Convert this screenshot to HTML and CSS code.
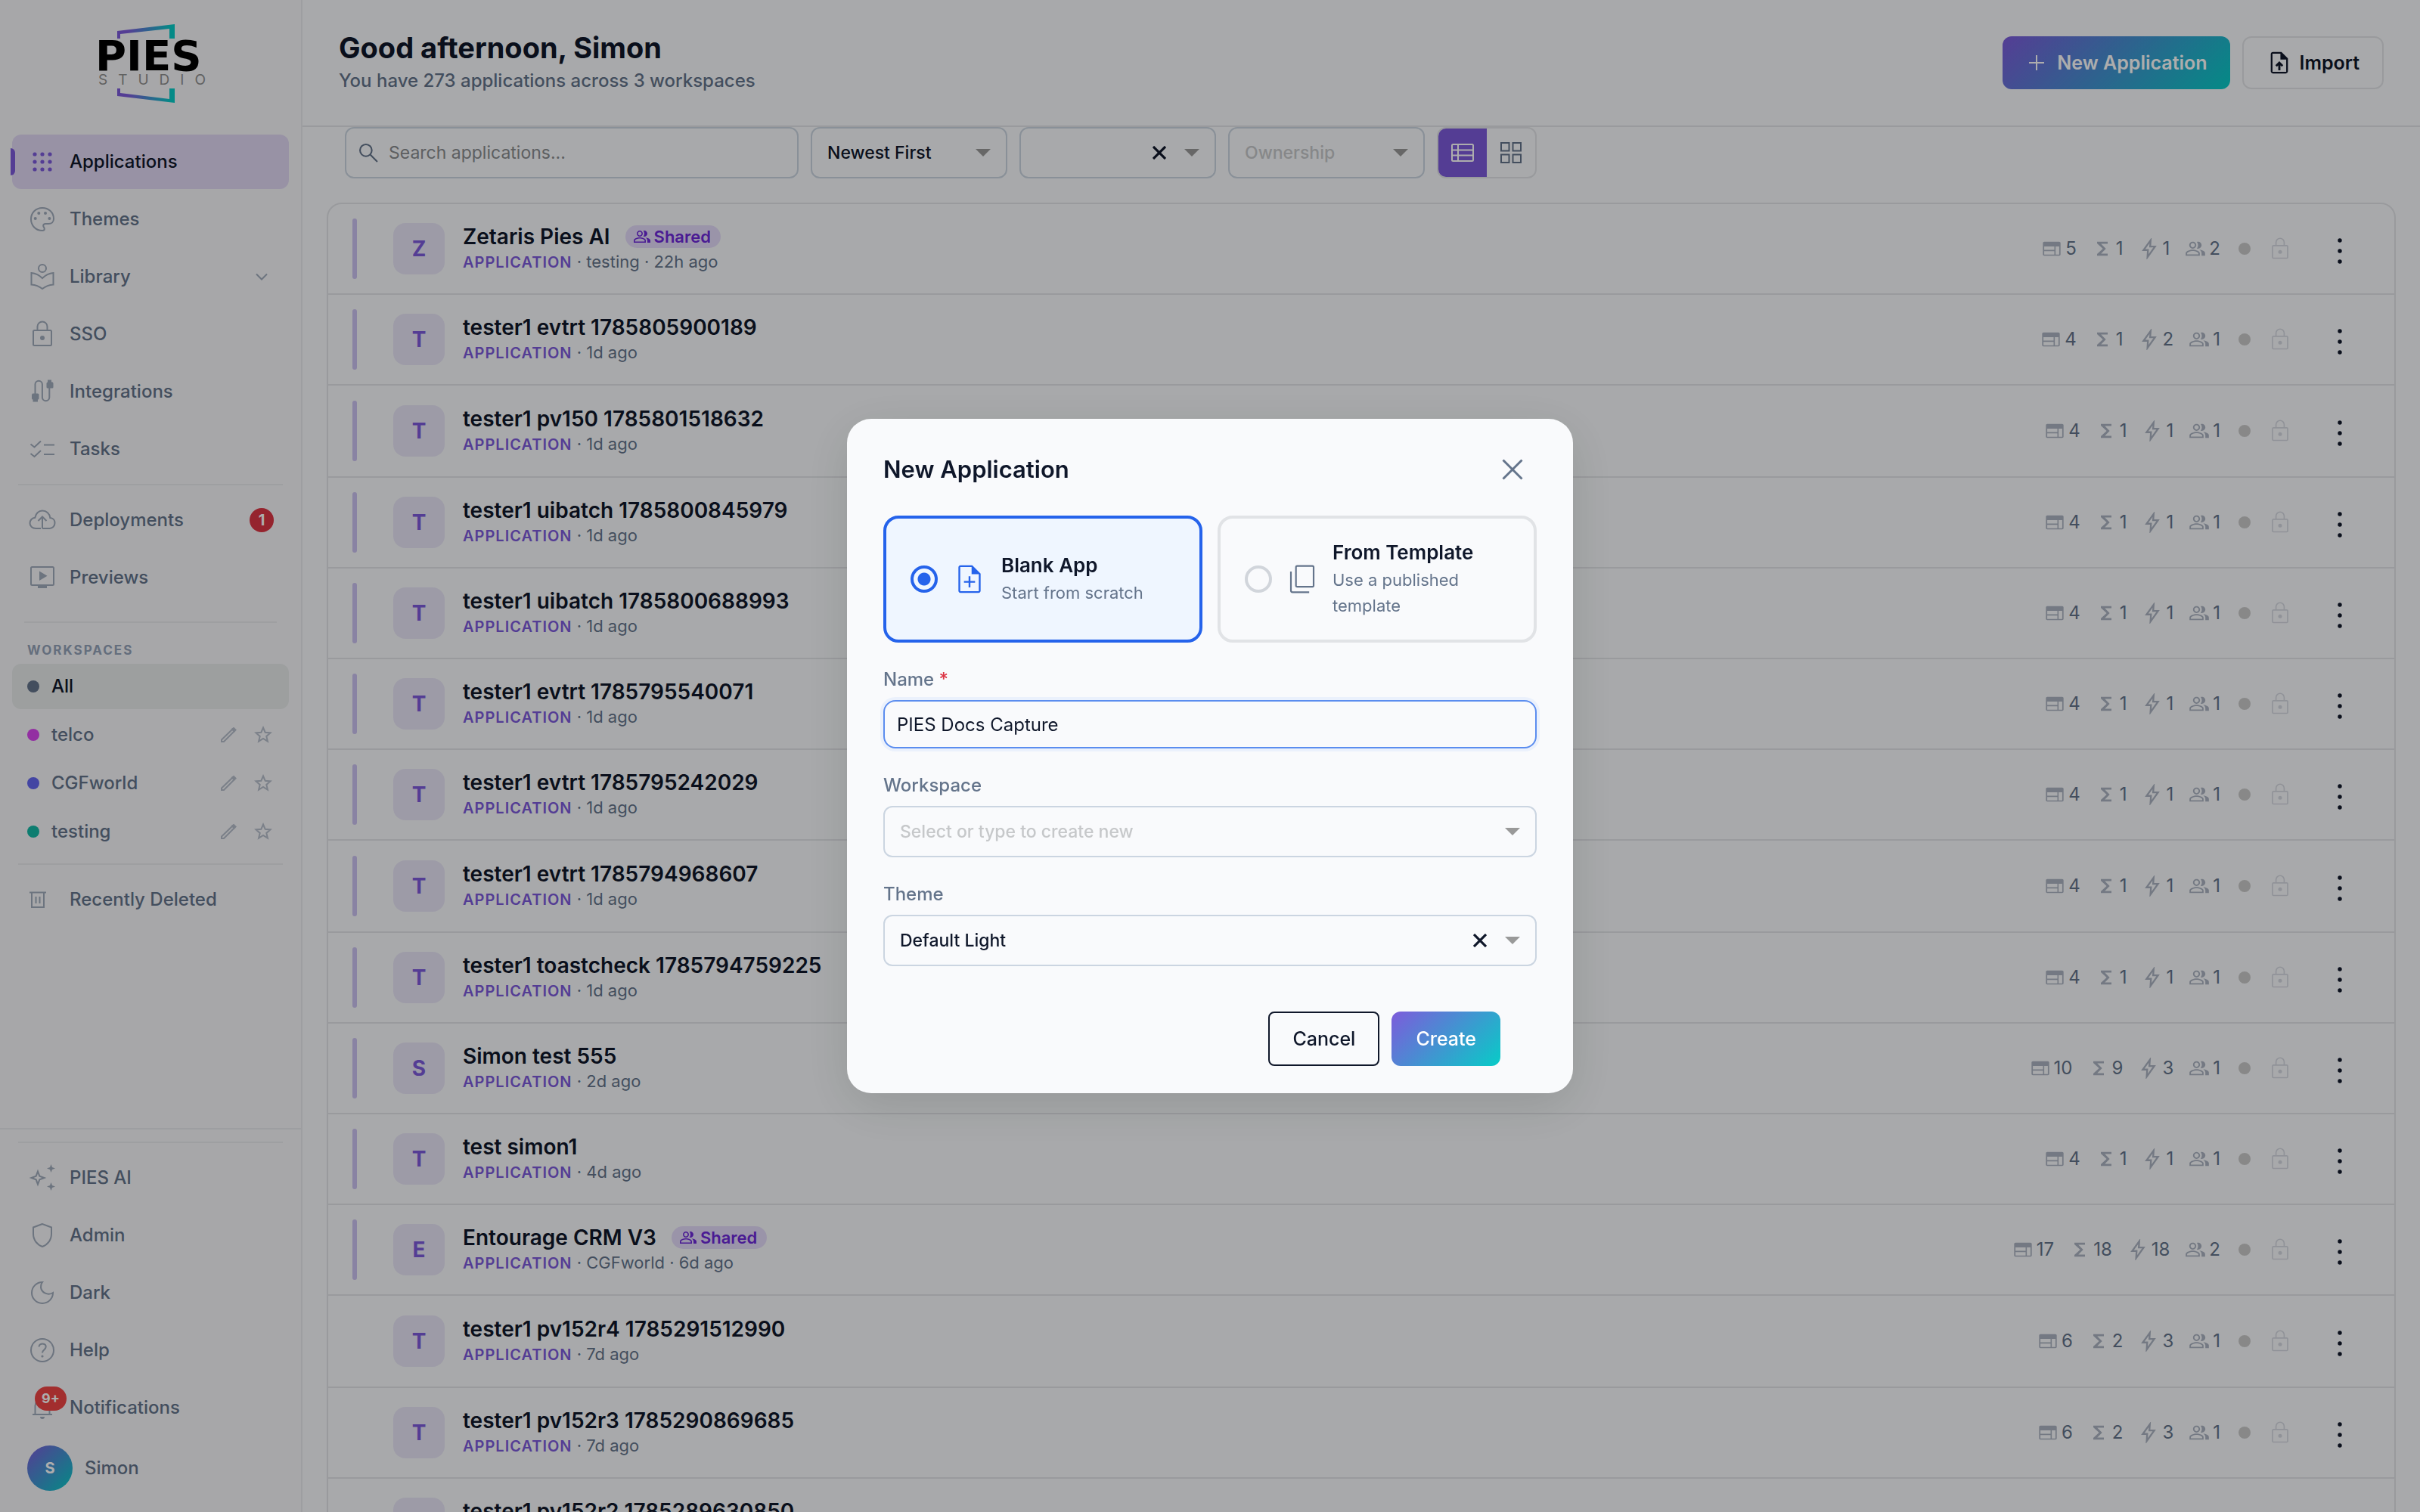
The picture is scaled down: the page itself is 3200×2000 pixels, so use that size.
FILE: index.html
```html
<!DOCTYPE html>
<html lang="en">
<head>
<meta charset="utf-8">
<title>PIES Studio – Applications</title>
<link rel="stylesheet" href="styles.css">
</head>
<body>
<svg class="sprite" aria-hidden="true">
  <symbol id="i-apps" viewBox="0 0 36 36"><g fill="currentColor" stroke="none"><circle cx="8" cy="8" r="2.6"/><circle cx="18" cy="8" r="2.6"/><circle cx="28" cy="8" r="2.6"/><circle cx="8" cy="18" r="2.6"/><circle cx="18" cy="18" r="2.6"/><circle cx="28" cy="18" r="2.6"/><circle cx="8" cy="28" r="2.6"/><circle cx="18" cy="28" r="2.6"/><circle cx="28" cy="28" r="2.6"/></g></symbol>
  <symbol id="i-palette" viewBox="0 0 36 36"><path d="M18 3C9.300 3 3 9.500 3 18s6.500 15 15 15c1.800 0 2.800-1 2.800-2.300 0-.9-.4-1.500-.8-2.100-.5-.7-.8-1.200-.8-2 0-1.600 1.300-2.600 3-2.600h4c4 0 6.800-2.700 6.800-6.500C33 9 26.300 3 18 3z"/><g fill="currentColor" stroke="none"><circle cx="8.700" cy="17" r="2"/><circle cx="13.300" cy="10" r="2"/><circle cx="22" cy="10" r="2"/><circle cx="27.400" cy="17" r="2"/></g></symbol>
  <symbol id="i-library" viewBox="0 0 36 36"><circle cx="18" cy="7" r="5"/><path d="M3.500 13c5.500.5 10.500 3 14.500 7 4-4 9-6.500 14.500-7v15.500c-5.500.3-10.500 2.300-14.500 5.500-4-3.200-9-5.200-14.500-5.500z"/></symbol>
  <symbol id="i-lock" viewBox="0 0 36 36"><rect x="6" y="13" width="24" height="20" rx="1.500"/><path d="M11.500 13V8a6.500 6.500 0 0 1 13 0v5"/><circle cx="18" cy="23" r="3" fill="currentColor" stroke="none"/></symbol>
  <symbol id="i-cable" viewBox="0 0 36 36"><path d="M8.500 21V8.500a4.700 4.700 0 0 1 9.400 0v17a4.700 4.700 0 0 0 9.400 0V12"/><path fill="currentColor" stroke="none" d="M5 20.500h7a1.500 1.500 0 0 1 1.500 1.500v5a1.500 1.500 0 0 1-1.500 1.500v3H5.500v-3A1.500 1.500 0 0 1 4 27v-5zM25 2.500h5v3a2 2 0 0 1 2.500 1.500v5a1.500 1.500 0 0 1-1.500 1.500h-6a1.500 1.500 0 0 1-1.500-1.500V7A2 2 0 0 1 25 5.500z"/></symbol>
  <symbol id="i-tasks" viewBox="0 0 36 36"><path d="M2.500 11.500l5 4 8.500-8M2.500 24l5 4 8.500-8M20 12.500h14M20 25h14"/></symbol>
  <symbol id="i-cloud" viewBox="0 0 36 36"><path d="M16 29H9.500C4.800 29 1.500 26 1.500 22c0-4 3-7 6.800-7.300C9.300 9.300 13.200 5.500 18 5.500c5.500 0 9.800 4 10.300 9.500 3.600.2 6.200 3 6.200 6.800 0 4-3 7.200-7 7.200H19c-.8 0-1-.5-1-1.500V13.500M12.500 19l5.500-5.500 5.500 5.500"/></symbol>
  <symbol id="i-preview" viewBox="0 0 36 36"><rect x="3" y="4" width="30" height="24" rx="1.500"/><path fill="currentColor" stroke="none" d="M14 9.500l10.500 6.300L14 22zM12 28h12v4H12z"/></symbol>
  <symbol id="i-sparkle" viewBox="0 0 36 36"><path d="M12 9.500l2.300 6.200 6.200 2.300-6.200 2.300L12 26.500l-2.300-6.200L3.500 18l6.200-2.300z"/><path fill="currentColor" stroke="none" d="M29.500 0l1.500 4 4 1.500-4 1.500-1.500 4L28 7l-4-1.500L28 4zM29.500 24l1.500 4 4 1.500-4 1.500-1.500 4-1.500-4-4-1.500 4-1.500z"/></symbol>
  <symbol id="i-shield" viewBox="0 0 36 36"><path d="M18 3L6 7.500V16c0 8 5 14.500 12 17 7-2.500 12-9 12-17V7.500z"/></symbol>
  <symbol id="i-moon" viewBox="0 0 36 36"><path d="M18 4A14 14 0 1 0 32 18c-6.500 4-15 0-16-7-.3-2.500.4-5 2-7z"/></symbol>
  <symbol id="i-help" viewBox="0 0 36 36"><circle cx="18" cy="18" r="15"/><path d="M13.500 13.500c.3-2.500 2-4 4.600-4 2.700 0 4.600 1.600 4.600 4 0 3.600-4.700 3.800-4.700 8"/><circle cx="18" cy="26" r="1.600" fill="currentColor" stroke="none"/></symbol>
  <symbol id="i-bell" viewBox="0 0 36 36"><path d="M5 27h26M8.500 27V15.500a9.500 9.500 0 0 1 19 0V27"/><path fill="currentColor" stroke="none" d="M15 30h6a3 3 0 0 1-6 0z"/></symbol>
  <symbol id="i-trash" viewBox="0 0 24 24"><path d="M1 2.500h22M4 3v19h16V3M9.500 8v9M14.500 8v9"/></symbol>
  <symbol id="i-edit" viewBox="0 0 24 24"><path d="M3 18.500L17.500 4.500l2.500 2.500L6 21H3z"/><path d="M17 4.500l2-1.500 2.500 2.500-2 2z" fill="currentColor"/></symbol>
  <symbol id="i-star" viewBox="0 0 24 24"><path d="M12 2.500l2.700 6.300 6.800.6-5.200 4.500 1.600 6.700L12 17l-5.900 3.600 1.600-6.700L2.500 9.400l6.800-.6z"/></symbol>
  <symbol id="i-chevron" viewBox="0 0 16 16"><path d="M1 4.500l7 7 7-7"/></symbol>
  <symbol id="i-search" viewBox="0 0 24 24"><circle cx="8.500" cy="8.500" r="7.500"/><path d="M14 14l9 9"/></symbol>
  <symbol id="i-plus" viewBox="0 0 20 20"><path d="M10 0v20M0 10h20"/></symbol>
  <symbol id="i-upload" viewBox="0 0 24 24"><path fill="currentColor" stroke="none" d="M14 2H6c-1.100 0-2 .9-2 2v16c0 1.100.9 2 2 2h12c1.100 0 2-.9 2-2V8zm4.400 18.400H5.600V3.600H13V9h5.400z"/><path d="M12 19v-6.500M9 15l3-3 3 3"/></symbol>
  <symbol id="i-doc" viewBox="0 0 24 24"><path fill="currentColor" stroke="none" d="M14 2H5.500C4.700 2 4 2.700 4 3.500v17c0 .8.700 1.500 1.500 1.500h13c.8 0 1.500-.7 1.500-1.500V8zm4.700 18.700H5.300V3.300H13.500V8.500h5.200z"/><path d="M12 10v8M8 14h8"/></symbol>
  <symbol id="i-copy" viewBox="0 0 24 24"><rect x="7" y="1.600" width="14" height="16.500" rx="1"/><path d="M3 6v15c0 .8.400 1.400 1.300 1.400H17.500"/></symbol>
  <symbol id="i-x" viewBox="0 0 28 28"><path d="M1.500 1.500l25 25M26.500 1.500l-25 25"/></symbol>
  <symbol id="i-web" viewBox="0 0 24 24"><path fill="currentColor" stroke="none" d="M20.500 4h-17C2.700 4 2 4.700 2 5.500v13c0 .8.700 1.500 1.500 1.500h17c.8 0 1.500-.7 1.500-1.500v-13c0-.8-.7-1.500-1.500-1.500zM15 18.600H3.500V14.700H15zm0-5.300H3.500V9.500H15zm5.500 5.300h-4.100V9.500h4.100z"/></symbol>
  <symbol id="i-sum" viewBox="0 0 24 24"><path fill="currentColor" stroke="none" d="M18 4H6v2l6.500 6L6 18v2h12v-2.500h-7.500l5.500-5.500-5.500-5.500H18z"/></symbol>
  <symbol id="i-bolt" viewBox="0 0 24 24"><path d="M13.500 2.500L5.500 13.500h5L10 21.500l8.500-12h-5.500z"/></symbol>
  <symbol id="i-people" viewBox="0 0 24 24"><path fill="currentColor" stroke="none" d="M16.670 13.130C18.040 14.060 19 15.320 19 17v3h4v-3c0-2.180-3.570-3.470-6.330-3.870zM15 12c2.210 0 4-1.790 4-4s-1.790-4-4-4c-.47 0-.91.1-1.330.24C14.500 5.270 15 6.580 15 8s-.5 2.730-1.330 3.760c.42.14.86.24 1.330.24zM9 12c2.210 0 4-1.790 4-4s-1.790-4-4-4-4 1.790-4 4 1.790 4 4 4zm0-6.400c1.300 0 2.400 1.100 2.400 2.400S10.300 10.400 9 10.400 6.600 9.300 6.600 8 7.700 5.600 9 5.600zM9 13c-2.670 0-8 1.340-8 4v3h16v-3c0-2.660-5.330-4-8-4zm6.400 5.400H2.600V17c.3-.9 3.500-2.400 6.400-2.400s6.100 1.500 6.400 2.400z"/></symbol>
  <symbol id="i-dots" viewBox="0 0 8 34"><g fill="currentColor" stroke="none"><circle cx="4" cy="3" r="2.700"/><circle cx="4" cy="17" r="2.700"/><circle cx="4" cy="31" r="2.700"/></g></symbol>
  <symbol id="i-list" viewBox="0 0 30 24"><rect x="1" y="1" width="28" height="22" rx="1.500"/><path d="M9 1v22M1 8.500h28M1 15.500h28"/></symbol>
  <symbol id="i-grid" viewBox="0 0 28 28"><path d="M1 1h10.500v10.500H1zM16.500 1H27v10.500H16.500zM1 16.500h10.500V27H1zM16.500 16.500H27V27H16.500z"/></symbol>
</svg>

<div class="app">
  <aside class="sidebar">
    <a class="logo" href="#" aria-label="PIES Studio">
      <svg width="140" height="106" viewBox="0 0 140 106">
        <defs><linearGradient id="frame" gradientUnits="userSpaceOnUse" x1="25" x2="101" y1="0" y2="0"><stop offset=".2" stop-color="#7d5bdb"/><stop offset=".95" stop-color="#07ccc7"/></linearGradient></defs>
        <path fill="url(#frame)" d="M26 10l76-9v19h-7V7L30 14v6h-4zM26 86h4v6l65 8V86h7v19l-76-9z"/>
        <text class="logo-name" x="-3" y="62">PIES</text>
        <text class="logo-sub" x="1" y="81">STUDIO</text>
      </svg>
    </a>
    <nav class="nav">
      <a class="nav-item active" href="#"><svg><use href="#i-apps"/></svg>Applications</a>
      <a class="nav-item" href="#"><svg><use href="#i-palette"/></svg>Themes</a>
      <a class="nav-item" href="#"><svg><use href="#i-library"/></svg>Library<svg class="chevron"><use href="#i-chevron"/></svg></a>
      <a class="nav-item" href="#"><svg><use href="#i-lock"/></svg>SSO</a>
      <a class="nav-item" href="#"><svg><use href="#i-cable"/></svg>Integrations</a>
      <a class="nav-item" href="#"><svg><use href="#i-tasks"/></svg>Tasks</a>
      <hr>
      <a class="nav-item" href="#"><svg><use href="#i-cloud"/></svg>Deployments<span class="count">1</span></a>
      <a class="nav-item" href="#"><svg><use href="#i-preview"/></svg>Previews</a>
    </nav>
    <section class="workspaces">
      <h2>Workspaces</h2>
      <div class="ws active"><i class="dot slate"></i><a href="#">All</a></div>
      <div class="ws"><i class="dot pink"></i><a href="#">telco</a><button aria-label="Edit telco"><svg><use href="#i-edit"/></svg></button><button aria-label="Star telco"><svg><use href="#i-star"/></svg></button></div>
      <div class="ws"><i class="dot indigo"></i><a href="#">CGFworld</a><button aria-label="Edit CGFworld"><svg><use href="#i-edit"/></svg></button><button aria-label="Star CGFworld"><svg><use href="#i-star"/></svg></button></div>
      <div class="ws"><i class="dot teal"></i><a href="#">testing</a><button aria-label="Edit testing"><svg><use href="#i-edit"/></svg></button><button aria-label="Star testing"><svg><use href="#i-star"/></svg></button></div>
    </section>
    <nav class="nav deleted">
      <hr>
      <a class="nav-item" href="#"><svg class="small"><use href="#i-trash"/></svg>Recently Deleted</a>
    </nav>
    <nav class="nav bottom">
      <hr>
      <a class="nav-item" href="#"><svg><use href="#i-sparkle"/></svg>PIES AI</a>
      <a class="nav-item" href="#"><svg><use href="#i-shield"/></svg>Admin</a>
      <a class="nav-item" href="#"><svg><use href="#i-moon"/></svg>Dark</a>
      <a class="nav-item" href="#"><svg><use href="#i-help"/></svg>Help</a>
      <a class="nav-item" href="#"><svg><use href="#i-bell"/></svg>Notifications<span class="alerts">9+</span></a>
      <a class="nav-item user" href="#"><span class="user-pic">S</span>Simon</a>
    </nav>
  </aside>

  <main class="main">
    <header class="page-head">
      <div class="greeting">
        <h1>Good afternoon, Simon</h1>
        <p>You have 273 applications across 3 workspaces</p>
      </div>
      <button class="btn primary"><svg class="plus"><use href="#i-plus"/></svg>New Application</button>
      <button class="btn outline"><svg><use href="#i-upload"/></svg>Import</button>
    </header>
    <div class="toolbar">
      <label class="search"><svg><use href="#i-search"/></svg><input type="search" placeholder="Search applications..." aria-label="Search applications"></label>
      <div class="select"><select aria-label="Sort order"><option>Newest First</option></select><i class="arrow"></i></div>
      <div class="select clearable"><select aria-label="Type"><option></option></select><button class="clear" aria-label="Clear type"><svg><use href="#i-x"/></svg></button><i class="arrow"></i></div>
      <div class="select empty"><select aria-label="Ownership"><option>Ownership</option></select><i class="arrow"></i></div>
      <div class="views">
        <button class="on" aria-label="List view"><svg class="list-ico"><use href="#i-list"/></svg></button>
        <button aria-label="Grid view"><svg class="grid-ico"><use href="#i-grid"/></svg></button>
      </div>
    </div>

    <ul class="apps">
      <li class="row mine"><span class="tile">Z</span><div class="info"><h3>Zetaris Pies AI <span class="shared"><svg><use href="#i-people"/></svg>Shared</span></h3><p><b>Application</b> · testing · 22h ago</p></div>
        <div class="stats"><span><svg><use href="#i-web"/></svg>5</span><span><svg><use href="#i-sum"/></svg>1</span><span><svg><use href="#i-bolt"/></svg>1</span><span><svg><use href="#i-people"/></svg>2</span></div><i class="status"></i><svg class="lock"><use href="#i-lock"/></svg><button class="more" aria-label="More"><svg><use href="#i-dots"/></svg></button></li>
      <li class="row mine"><span class="tile">T</span><div class="info"><h3>tester1 evtrt 1785805900189</h3><p><b>Application</b> · 1d ago</p></div>
        <div class="stats"><span><svg><use href="#i-web"/></svg>4</span><span><svg><use href="#i-sum"/></svg>1</span><span><svg><use href="#i-bolt"/></svg>2</span><span><svg><use href="#i-people"/></svg>1</span></div><i class="status"></i><svg class="lock"><use href="#i-lock"/></svg><button class="more" aria-label="More"><svg><use href="#i-dots"/></svg></button></li>
      <li class="row mine"><span class="tile">T</span><div class="info"><h3>tester1 pv150 1785801518632</h3><p><b>Application</b> · 1d ago</p></div>
        <div class="stats"><span><svg><use href="#i-web"/></svg>4</span><span><svg><use href="#i-sum"/></svg>1</span><span><svg><use href="#i-bolt"/></svg>1</span><span><svg><use href="#i-people"/></svg>1</span></div><i class="status"></i><svg class="lock"><use href="#i-lock"/></svg><button class="more" aria-label="More"><svg><use href="#i-dots"/></svg></button></li>
      <li class="row mine"><span class="tile">T</span><div class="info"><h3>tester1 uibatch 1785800845979</h3><p><b>Application</b> · 1d ago</p></div>
        <div class="stats"><span><svg><use href="#i-web"/></svg>4</span><span><svg><use href="#i-sum"/></svg>1</span><span><svg><use href="#i-bolt"/></svg>1</span><span><svg><use href="#i-people"/></svg>1</span></div><i class="status"></i><svg class="lock"><use href="#i-lock"/></svg><button class="more" aria-label="More"><svg><use href="#i-dots"/></svg></button></li>
      <li class="row mine"><span class="tile">T</span><div class="info"><h3>tester1 uibatch 1785800688993</h3><p><b>Application</b> · 1d ago</p></div>
        <div class="stats"><span><svg><use href="#i-web"/></svg>4</span><span><svg><use href="#i-sum"/></svg>1</span><span><svg><use href="#i-bolt"/></svg>1</span><span><svg><use href="#i-people"/></svg>1</span></div><i class="status"></i><svg class="lock"><use href="#i-lock"/></svg><button class="more" aria-label="More"><svg><use href="#i-dots"/></svg></button></li>
      <li class="row mine"><span class="tile">T</span><div class="info"><h3>tester1 evtrt 1785795540071</h3><p><b>Application</b> · 1d ago</p></div>
        <div class="stats"><span><svg><use href="#i-web"/></svg>4</span><span><svg><use href="#i-sum"/></svg>1</span><span><svg><use href="#i-bolt"/></svg>1</span><span><svg><use href="#i-people"/></svg>1</span></div><i class="status"></i><svg class="lock"><use href="#i-lock"/></svg><button class="more" aria-label="More"><svg><use href="#i-dots"/></svg></button></li>
      <li class="row mine"><span class="tile">T</span><div class="info"><h3>tester1 evtrt 1785795242029</h3><p><b>Application</b> · 1d ago</p></div>
        <div class="stats"><span><svg><use href="#i-web"/></svg>4</span><span><svg><use href="#i-sum"/></svg>1</span><span><svg><use href="#i-bolt"/></svg>1</span><span><svg><use href="#i-people"/></svg>1</span></div><i class="status"></i><svg class="lock"><use href="#i-lock"/></svg><button class="more" aria-label="More"><svg><use href="#i-dots"/></svg></button></li>
      <li class="row mine"><span class="tile">T</span><div class="info"><h3>tester1 evtrt 1785794968607</h3><p><b>Application</b> · 1d ago</p></div>
        <div class="stats"><span><svg><use href="#i-web"/></svg>4</span><span><svg><use href="#i-sum"/></svg>1</span><span><svg><use href="#i-bolt"/></svg>1</span><span><svg><use href="#i-people"/></svg>1</span></div><i class="status"></i><svg class="lock"><use href="#i-lock"/></svg><button class="more" aria-label="More"><svg><use href="#i-dots"/></svg></button></li>
      <li class="row mine"><span class="tile">T</span><div class="info"><h3>tester1 toastcheck 1785794759225</h3><p><b>Application</b> · 1d ago</p></div>
        <div class="stats"><span><svg><use href="#i-web"/></svg>4</span><span><svg><use href="#i-sum"/></svg>1</span><span><svg><use href="#i-bolt"/></svg>1</span><span><svg><use href="#i-people"/></svg>1</span></div><i class="status"></i><svg class="lock"><use href="#i-lock"/></svg><button class="more" aria-label="More"><svg><use href="#i-dots"/></svg></button></li>
      <li class="row mine"><span class="tile">S</span><div class="info"><h3>Simon test 555</h3><p><b>Application</b> · 2d ago</p></div>
        <div class="stats"><span><svg><use href="#i-web"/></svg>10</span><span><svg><use href="#i-sum"/></svg>9</span><span><svg><use href="#i-bolt"/></svg>3</span><span><svg><use href="#i-people"/></svg>1</span></div><i class="status"></i><svg class="lock"><use href="#i-lock"/></svg><button class="more" aria-label="More"><svg><use href="#i-dots"/></svg></button></li>
      <li class="row mine"><span class="tile">T</span><div class="info"><h3>test simon1</h3><p><b>Application</b> · 4d ago</p></div>
        <div class="stats"><span><svg><use href="#i-web"/></svg>4</span><span><svg><use href="#i-sum"/></svg>1</span><span><svg><use href="#i-bolt"/></svg>1</span><span><svg><use href="#i-people"/></svg>1</span></div><i class="status"></i><svg class="lock"><use href="#i-lock"/></svg><button class="more" aria-label="More"><svg><use href="#i-dots"/></svg></button></li>
      <li class="row mine"><span class="tile">E</span><div class="info"><h3>Entourage CRM V3 <span class="shared"><svg><use href="#i-people"/></svg>Shared</span></h3><p><b>Application</b> · CGFworld · 6d ago</p></div>
        <div class="stats"><span><svg><use href="#i-web"/></svg>17</span><span><svg><use href="#i-sum"/></svg>18</span><span><svg><use href="#i-bolt"/></svg>18</span><span><svg><use href="#i-people"/></svg>2</span></div><i class="status"></i><svg class="lock"><use href="#i-lock"/></svg><button class="more" aria-label="More"><svg><use href="#i-dots"/></svg></button></li>
      <li class="row"><span class="tile">T</span><div class="info"><h3>tester1 pv152r4 1785291512990</h3><p><b>Application</b> · 7d ago</p></div>
        <div class="stats"><span><svg><use href="#i-web"/></svg>6</span><span><svg><use href="#i-sum"/></svg>2</span><span><svg><use href="#i-bolt"/></svg>3</span><span><svg><use href="#i-people"/></svg>1</span></div><i class="status"></i><svg class="lock"><use href="#i-lock"/></svg><button class="more" aria-label="More"><svg><use href="#i-dots"/></svg></button></li>
      <li class="row"><span class="tile">T</span><div class="info"><h3>tester1 pv152r3 1785290869685</h3><p><b>Application</b> · 7d ago</p></div>
        <div class="stats"><span><svg><use href="#i-web"/></svg>6</span><span><svg><use href="#i-sum"/></svg>2</span><span><svg><use href="#i-bolt"/></svg>3</span><span><svg><use href="#i-people"/></svg>1</span></div><i class="status"></i><svg class="lock"><use href="#i-lock"/></svg><button class="more" aria-label="More"><svg><use href="#i-dots"/></svg></button></li>
      <li class="row"><span class="tile">T</span><div class="info"><h3>tester1 pv152r2 1785289630850</h3><p><b>Application</b> · 7d ago</p></div>
        <div class="stats"><span><svg><use href="#i-web"/></svg>6</span><span><svg><use href="#i-sum"/></svg>2</span><span><svg><use href="#i-bolt"/></svg>3</span><span><svg><use href="#i-people"/></svg>1</span></div><i class="status"></i><svg class="lock"><use href="#i-lock"/></svg><button class="more" aria-label="More"><svg><use href="#i-dots"/></svg></button></li>
    </ul>
  </main>
</div>

<div class="backdrop">
  <form class="modal" role="dialog" aria-modal="true" aria-labelledby="dlg-title">
    <header class="modal-head">
      <h2 id="dlg-title">New Application</h2>
      <button type="button" class="close" aria-label="Close"><svg><use href="#i-x"/></svg></button>
    </header>
    <div class="choices">
      <label class="choice checked"><input type="radio" name="kind" checked><svg class="doc"><use href="#i-doc"/></svg><span><strong>Blank App</strong><small>Start from scratch</small></span></label>
      <label class="choice"><input type="radio" name="kind"><svg class="copy"><use href="#i-copy"/></svg><span><strong>From Template</strong><small>Use a published template</small></span></label>
    </div>
    <div class="field"><label for="f-name">Name <em>*</em></label><input class="text" id="f-name" type="text" value="PIES Docs Capture"></div>
    <div class="field"><label for="f-ws">Workspace</label><div class="select empty"><select id="f-ws"><option>Select or type to create new</option></select><i class="arrow"></i></div></div>
    <div class="field"><label for="f-theme">Theme</label><div class="select clearable"><select id="f-theme"><option>Default Light</option></select><button type="button" class="clear" aria-label="Clear theme"><svg><use href="#i-x"/></svg></button><i class="arrow"></i></div></div>
    <footer class="actions">
      <button type="button" class="btn cancel">Cancel</button>
      <button type="submit" class="btn primary create">Create</button>
    </footer>
  </form>
</div>
</body>
</html>
```
FILE: styles.css
```css
:root {
  --ink: #0f172a;
  --muted: #64748b;
  --icon: #a0abbb;
  --line: #e2e4e8;
  --field: #cbd5e1;
  --purple: #7d5bdb;
  --page: #f8fafc;
  --brand: linear-gradient(135deg, #7d5bdb, #07ccc7);
}

* { box-sizing: border-box; margin: 0; padding: 0; }

body {
  font: 500 24px/34px Inter, "Liberation Sans", sans-serif;
  color: var(--ink);
  background: var(--page);
  height: 100vh;
  overflow: hidden;
}

button, input, select { font: inherit; color: inherit; background: none; border: 0; }
a { color: inherit; text-decoration: none; }
svg { fill: none; stroke: currentColor; stroke-width: 2; flex: none; display: block; }
.sprite { display: none; }

.app { display: flex; height: 100%; }

/* Sidebar */
.sidebar {
  flex: none;
  width: 400px;
  border-right: 2px solid #e8e9ed;
  background: #f6f6f9;
  display: flex;
  flex-direction: column;
}
.logo { display: flex; justify-content: center; padding: 31px 0 41px; }
.logo svg { stroke: none; overflow: visible; }
.logo-name { font: bold 56px "DejaVu Sans", sans-serif; fill: #000; }
.logo-sub { font: 400 19px Inter, sans-serif; letter-spacing: 14px; fill: #909090; }

.nav { display: flex; flex-direction: column; gap: 4px; padding: 0 16px; }
.nav hr { border: 0; border-top: 2px solid #e9eaee; margin: 6px 8px; }
.nav-item {
  position: relative;
  display: flex;
  align-items: center;
  gap: 18px;
  height: 72px;
  padding: 0 20px 0 22px;
  border-radius: 12px;
  color: var(--muted);
}
.nav-item svg { width: 36px; height: 36px; color: var(--icon); }
.nav-item.active { background: #e0d8f4; color: var(--ink); }
.nav-item.active svg { color: var(--purple); }
.nav-item.active::before {
  content: "";
  position: absolute;
  left: -2px;
  top: 18px;
  width: 6px;
  height: 36px;
  border-radius: 0 6px 6px 0;
  background: var(--purple);
}
.nav-item .chevron { width: 16px; height: 16px; margin: 0 8px 0 auto; }
.nav-item .small { width: 24px; height: 24px; margin-right: 12px; }
.count {
  margin-left: auto;
  width: 32px;
  height: 32px;
  border-radius: 50%;
  background: #dc3545;
  color: #fff;
  font-size: 20px;
  font-weight: 700;
  line-height: 32px;
  text-align: center;
}

.workspaces {
  margin: 22px 16px 0;
  display: flex;
  flex-direction: column;
  gap: 4px;
}
.workspaces::before { content: ""; border-top: 2px solid #e9eaee; margin: 0 16px 18px; }
.workspaces h2 {
  padding: 0 20px;
  font-size: 17px;
  line-height: 28px;
  font-weight: 700;
  letter-spacing: 2px;
  text-transform: uppercase;
  color: #94a3b8;
}
.ws {
  display: flex;
  align-items: center;
  gap: 16px;
  height: 60px;
  padding: 0 20px;
  border-radius: 12px;
  color: var(--muted);
}
.ws.active { background: #e7eaeb; color: var(--ink); }
.ws a { flex: 1; }
.ws svg { width: 24px; height: 24px; color: #b5bdca; }
.ws button + button { margin: 0 2px 0 6px; }
.dot { width: 16px; height: 16px; border-radius: 50%; }
.slate { background: #64748b; }
.pink { background: #d946ef; }
.indigo { background: #6366f1; }
.teal { background: #14b8a6; }

.deleted { padding-top: 6px; }
.bottom { margin-top: auto; padding-top: 10px; padding-bottom: 18px; border-top: 2px solid #e8e9ed; }
.alerts {
  position: absolute;
  left: 30px;
  top: 8px;
  width: 42px;
  height: 32px;
  border-radius: 16px;
  background: #ef4444;
  color: #fff;
  font-size: 18px;
  font-weight: 700;
  line-height: 32px;
  text-align: center;
}
.nav-item.user { height: 80px; padding-left: 20px; gap: 16px; }
.user-pic {
  width: 60px;
  height: 60px;
  border-radius: 50%;
  background: var(--brand);
  color: #fff;
  font-size: 20px;
  font-weight: 700;
  line-height: 60px;
  text-align: center;
}

/* Header */
.main { flex: 1; min-width: 0; overflow: hidden; }
.page-head {
  display: flex;
  align-items: center;
  gap: 16px;
  height: 168px;
  padding: 0 48px;
  border-bottom: 2px solid var(--line);
}
.greeting { flex: 1; }
.greeting h1 { font-size: 38px; line-height: 48px; font-weight: 700; }
.greeting p { color: var(--muted); line-height: 40px; }
.btn {
  display: flex;
  align-items: center;
  gap: 10px;
  height: 70px;
  padding: 0 30px;
  border-radius: 12px;
  font-size: 25px;
  font-weight: 600;
}
.btn svg { width: 34px; height: 34px; }
.btn .plus { width: 20px; height: 20px; margin: 0 7px 0 5px; }
.primary { background: var(--brand); color: #fff; }
.outline { border: 2px solid var(--line); }

/* Toolbar */
.toolbar { display: flex; gap: 16px; padding: 0 56px 32px; }
.search {
  width: 600px;
  height: 68px;
  display: flex;
  align-items: center;
  gap: 14px;
  padding: 0 17px;
  border: 2px solid var(--field);
  border-radius: 12px;
  color: var(--muted);
}
.search svg { width: 25px; height: 25px; }
.search input { flex: 1; outline: 0; font-size: 23px; font-weight: 400; }
.search input::placeholder { color: #8a8c90; }
.select {
  display: grid;
  grid-template-columns: 1fr auto auto;
  align-items: center;
  width: 260px;
  height: 68px;
  border: 2px solid var(--field);
  border-radius: 12px;
  font-size: 23px;
}
.select select {
  appearance: none;
  grid-area: 1 / 1 / 2 / 4;
  width: 100%;
  height: 100%;
  padding: 0 20px;
  outline: 0;
}
.select.empty select { color: #c6c8ca; }
.select .arrow {
  grid-area: 1 / 3;
  margin: 0 20px 0 24px;
  border: 10px solid transparent;
  border-top-color: #999;
  border-bottom: 0;
}
.select .clear { grid-area: 1 / 2; }
.clear svg { width: 18px; height: 18px; stroke-width: 5; }
.views { display: flex; width: 132px; height: 68px; border: 2px solid var(--line); border-radius: 12px; overflow: hidden; }
.views button { flex: 1; display: flex; align-items: center; justify-content: center; color: var(--muted); }
.views .on { background: var(--purple); color: #fff; }
.list-ico { width: 30px; height: 24px; }
.grid-ico { width: 28px; height: 28px; }

/* Application list */
.apps { margin: 0 32px; border: 2px solid var(--line); border-radius: 20px; list-style: none; }
.row {
  display: flex;
  align-items: center;
  height: 120px;
  padding: 0 32px;
  border-bottom: 2px solid var(--line);
}
.row:nth-child(5n+3) { height: 122px; }
.row::before { content: ""; width: 6px; height: 80px; border-radius: 3px; margin-right: 48px; }
.row.mine::before { background: #cac1f0; }
.tile {
  width: 68px;
  height: 68px;
  border-radius: 16px;
  background: #e8e5f7;
  color: var(--purple);
  font-size: 28px;
  font-weight: 700;
  line-height: 68px;
  text-align: center;
  margin-right: 24px;
}
.info { flex: 1; }
.info h3 { display: flex; align-items: center; gap: 20px; font-size: 28px; line-height: 34px; font-weight: 600; }
.info p { font-size: 22px; line-height: 32px; font-weight: 400; color: var(--muted); }
.info b { font-size: 20px; font-weight: 600; letter-spacing: 1px; text-transform: uppercase; color: var(--purple); }
.shared {
  display: flex;
  align-items: center;
  gap: 4px;
  height: 30px;
  padding: 0 13px 0 10px;
  border-radius: 15px;
  background: #e4dbf9;
  color: #6d28d9;
  font-size: 22px;
}
.shared svg { width: 24px; height: 24px; }
.stats { display: flex; gap: 20px; color: var(--muted); font-size: 24px; font-weight: 400; }
.stats span { display: flex; align-items: center; gap: 4px; }
.stats svg { width: 28px; height: 28px; color: #abb3c2; }
.status { width: 16px; height: 16px; border-radius: 50%; background: #c9c9c9; margin: 0 24px; }
.lock { width: 30px; height: 30px; color: #d5d8e1; }
.more { margin: 6px 36px 0 60px; }
.more svg { width: 8px; height: 34px; }

/* Dialog */
.backdrop {
  position: fixed;
  inset: 0;
  display: flex;
  align-items: center;
  justify-content: center;
  background: rgba(0, 0, 0, .32);
}
.modal {
  width: 960px;
  padding: 42px 48px 36px;
  border-radius: 32px;
  background: #f9fafc;
  box-shadow: 0 16px 64px rgba(0, 0, 0, .12);
}
.modal-head { display: flex; justify-content: space-between; align-items: center; padding-right: 18px; margin-bottom: 36px; }
.modal-head h2 { font-size: 31px; line-height: 50px; font-weight: 600; }
.close svg { width: 28px; height: 28px; color: var(--muted); stroke-width: 3; }
.choices { display: grid; grid-template-columns: 1fr 1fr; gap: 20px; }
.choice {
  display: flex;
  align-items: center;
  gap: 20px;
  height: 168px;
  padding: 0 32px;
  border: 4px solid #e1e3e6;
  border-radius: 20px;
}
.choice.checked { border-color: #2563eb; background: #eff6ff; }
.choice input {
  appearance: none;
  flex: none;
  width: 36px;
  height: 36px;
  border: 4px solid #d1d5db;
  border-radius: 50%;
}
.choice input:checked { border-color: #2563eb; background: radial-gradient(#2563eb 8px, transparent 9px); }
.choice svg { color: var(--muted); stroke-width: 1.3; }
.choice .doc { width: 44px; height: 44px; color: #2563eb; }
.choice .copy { width: 40px; height: 40px; }
.choice strong, .choice small { display: block; line-height: 34px; }
.choice strong { font-size: 26px; font-weight: 600; margin-bottom: 2px; }
.choice small { font-size: 22px; font-weight: 400; color: var(--muted); }
.field { margin-top: 32px; }
.field label { display: block; margin-bottom: 10px; color: var(--muted); }
.field em { font-style: normal; color: #dc3545; }
.field .select { width: 100%; }
.field .text {
  display: block;
  width: 100%;
  height: 64px;
  padding: 0 16px;
  border: 2px solid #5b8def;
  border-radius: 16px;
  outline: 0;
  box-shadow: 0 0 0 4px #ebf1fc;
  font-size: 24px;
  font-weight: 400;
}
.actions { display: flex; justify-content: flex-end; gap: 16px; margin: 60px 48px 0 0; }
.actions .btn { height: 72px; padding: 0 32px; font-weight: 500; }
.actions .cancel { border: 2px solid var(--ink); border-radius: 8px; padding: 0 30px; }
```
